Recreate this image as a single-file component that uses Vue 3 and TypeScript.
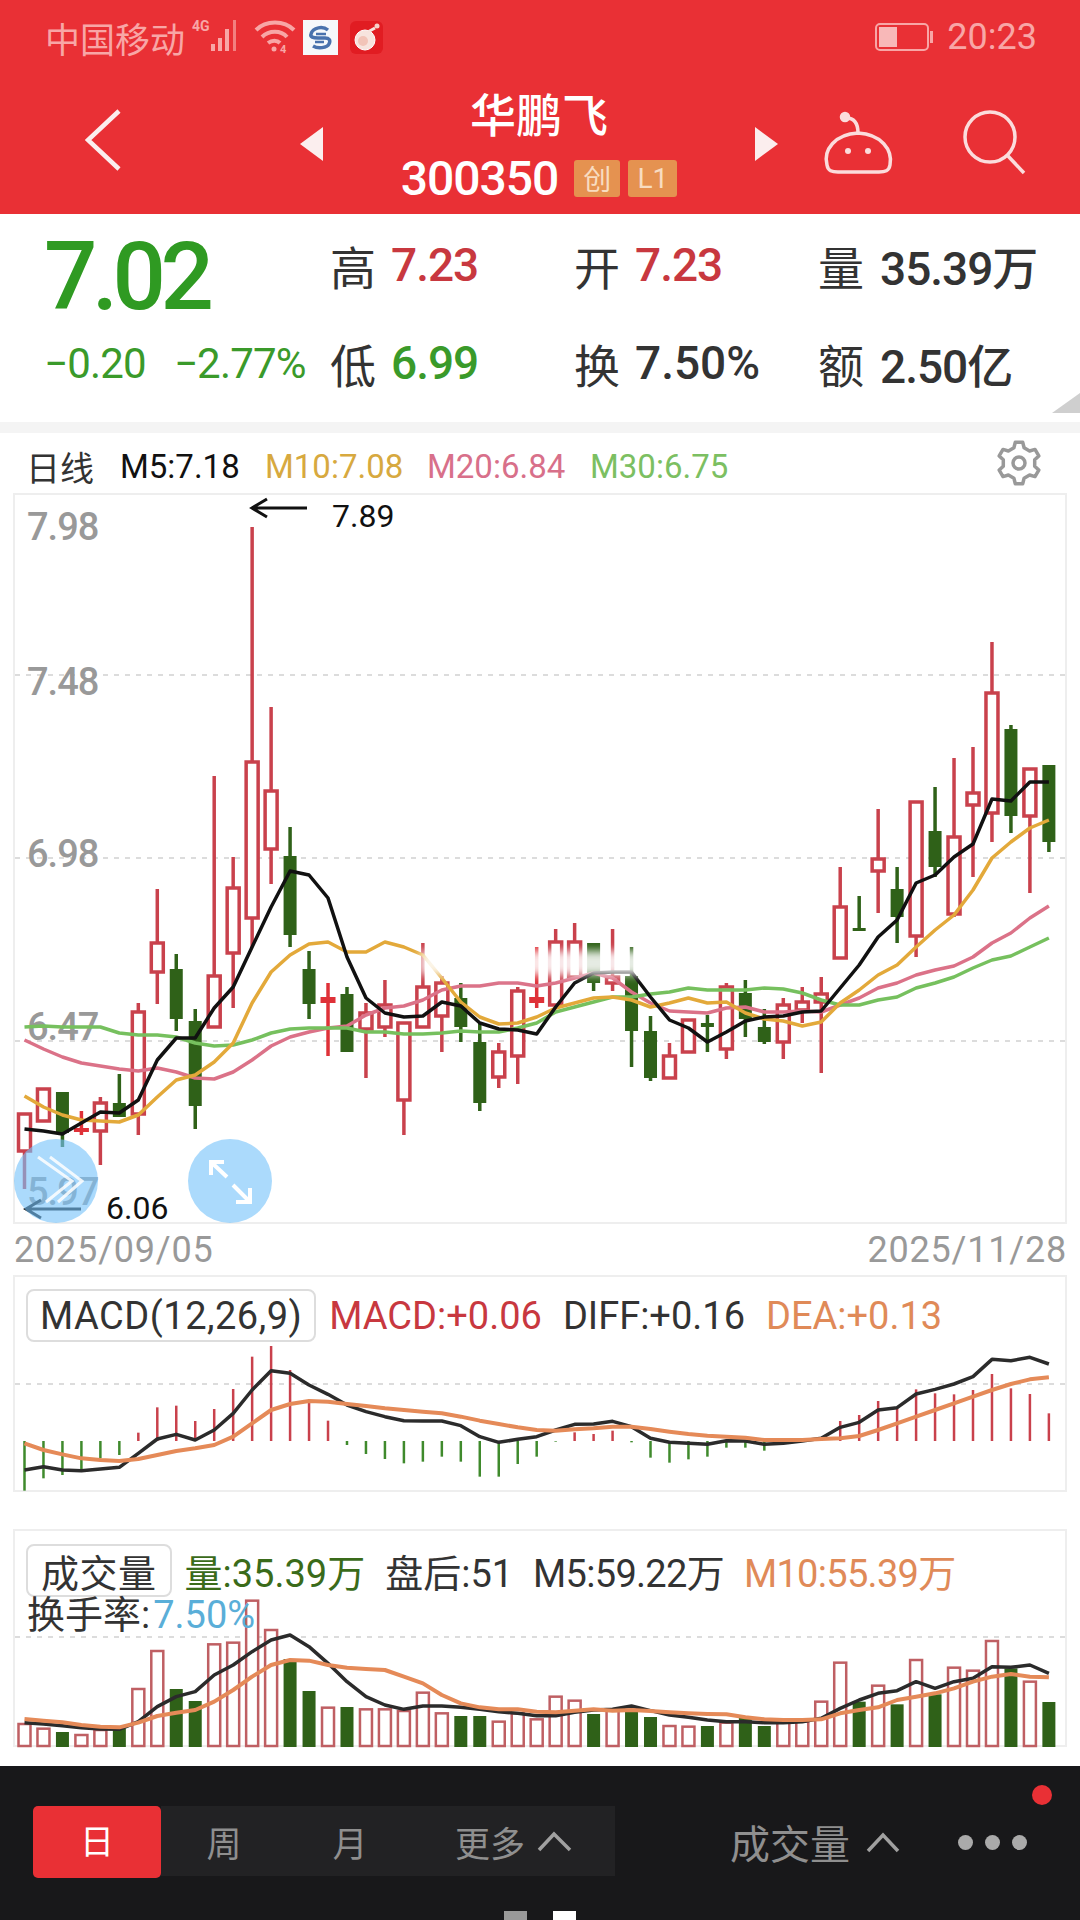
<template>
  <div class="phone">
    <header class="top">
      <div class="status">
        <span class="carrier">中国移动</span>
        <svg class="st-signal" width="53" height="36" viewBox="0 0 53 36">
          <text x="0" y="13" class="st-4g">4G</text>
          <rect x="19" y="26" width="4" height="7" fill="#f8a6a6" />
          <rect x="26" y="20" width="4" height="13" fill="#f8a6a6" />
          <rect x="33" y="11" width="4" height="22" fill="#f8a6a6" />
          <rect x="41" y="2" width="3" height="31" fill="#f28080" />
        </svg>
        <svg class="st-wifi" width="40" height="34" viewBox="0 0 40 34" fill="none" stroke="#f8a6a6" stroke-width="4">
          <path d="M1 10 C11 0 29 0 39 10" />
          <path d="M7 17 C14 10 26 10 32 17" />
          <path d="M13 23 C17 20 22 20 25 23" />
          <circle cx="19" cy="29" r="2.5" fill="#f8a6a6" stroke="none" />
          <text x="25" y="33" class="st-4k">4</text>
        </svg>
        <svg class="st-app" width="35" height="35" viewBox="0 0 35 35" fill="none">
          <rect width="35" height="35" fill="#f6f8fb" />
          <path d="M25 10 C20 6 10 7 8 14 C7 17 10 18 15 18 L22 18 C26 18 28 20 26 24 C24 28 15 29 10 26" stroke="#4a72ad" stroke-width="3.5" />
          <path d="M13 14 L23 14 M12 22 L21 22" stroke="#4a72ad" stroke-width="2.5" />
        </svg>
        <svg class="st-app2" width="33" height="33" viewBox="0 0 33 33">
          <rect width="33" height="33" rx="6" fill="#e11c22" />
          <circle cx="15" cy="19" r="10" fill="#f7e4de" stroke="#fff" stroke-width="1" />
          <path d="M16 12 L25 7" stroke="#f7e4de" stroke-width="3" />
          <circle cx="27" cy="5" r="2.5" fill="#f7d0c8" />
          <circle cx="13" cy="20" r="5" fill="#f2c4b8" />
        </svg>
        <span class="st-fill"></span>
        <svg class="st-batt" width="58" height="28" viewBox="0 0 58 28" fill="none">
          <rect x="1" y="1" width="52" height="26" rx="4" stroke="#f8a6a6" stroke-width="2" />
          <rect x="4" y="4" width="18" height="20" fill="#f8b8b8" />
          <rect x="55" y="8" width="3" height="12" fill="#f8a6a6" />
        </svg>
        <span class="clock">20:23</span>
      </div>
      <nav class="nav">
        <svg class="nav-back" width="36" height="62" viewBox="0 0 36 62" fill="none" stroke="#fbeeee" stroke-width="4.5">
          <path d="M34 2 L3 31 L34 60" />
        </svg>
        <svg class="nav-prev" width="23" height="34" viewBox="0 0 23 34"><path d="M23 0 L0 17 L23 34 Z" fill="#fbeeee" /></svg>
        <div class="nav-title">
          <div class="stock-name">华鹏飞</div>
          <div class="stock-code">
            <span class="code-num">300350</span>
            <span class="tag">创</span>
            <span class="tag tag-l">L1</span>
          </div>
        </div>
        <svg class="nav-next" width="23" height="34" viewBox="0 0 23 34"><path d="M0 0 L23 17 L0 34 Z" fill="#fbeeee" /></svg>
        <svg class="nav-robot" width="80" height="70" viewBox="820 110 80 70" fill="none" stroke="#fbdcdc" stroke-width="3.5">
          <circle cx="845" cy="117" r="3.5" fill="#fbdcdc" />
          <path d="M846 118 C855 118 858 124 858 133" />
          <path d="M827 165 C823 150 835 134 858 133 C881 134 893 150 890 165 C889 171 885 172 879 172 L838 172 C832 172 828 171 827 165 Z" />
          <circle cx="848" cy="151" r="3" fill="#fbdcdc" stroke="none" />
          <circle cx="868" cy="151" r="3" fill="#fbdcdc" stroke="none" />
        </svg>
        <svg class="nav-search" width="66" height="66" viewBox="960 110 66 66" fill="none" stroke="#fbdcdc" stroke-width="3.5">
          <circle cx="990" cy="137" r="25" />
          <path d="M1008 156 L1024 173" />
        </svg>
      </nav>
    </header>

    <section class="quote">
      <div class="price">7.02</div>
      <div class="cell"><i>高</i><b class="up">7.23</b></div>
      <div class="cell"><i>开</i><b class="up">7.23</b></div>
      <div class="cell wide"><i>量</i><b>35.39万</b></div>
      <div class="change"><span>−0.20</span><span>−2.77%</span></div>
      <div class="cell"><i>低</i><b class="down">6.99</b></div>
      <div class="cell"><i>换</i><b class="pct">7.50%</b></div>
      <div class="cell wide"><i>额</i><b>2.50亿</b></div>
      <span class="corner"></span>
    </section>
    <div class="band"></div>

    <div class="ma-row">
      <span class="ma-period">日线</span>
      <span class="ma m5">M5:7.18</span>
      <span class="ma m10">M10:7.08</span>
      <span class="ma m20">M20:6.84</span>
      <span class="ma m30">M30:6.75</span>
      <svg class="gear" width="46" height="46" viewBox="-23 -23 46 46" fill="none" stroke="#999" stroke-width="3.5">
        <path :d="gearPath" stroke-linejoin="round" />
        <circle r="6" />
      </svg>
    </div>

    <div class="box kline">
      <svg class="plot" width="1054" height="731" viewBox="13 493 1054 731">
        <line v-for="y in [675, 858, 1041]" :key="y" x1="15" x2="1065" :y1="y" :y2="y" class="grid" />
        <text v-for="a in axisLabels" :key="a.t" x="27" :y="a.y" class="axis">{{ a.t }}</text>
        <g v-for="c in candles" :key="c.x">
          <line :x1="c.x" :x2="c.x" :y1="c.wt" :y2="c.wb" :stroke="c.color" stroke-width="3.5" />
          <rect v-if="c.kind === 'h'" :x="c.x - 6" :y="c.bt" width="12" :height="c.bb - c.bt" fill="#fff" :stroke="c.color" stroke-width="3.5" />
          <rect v-else :x="c.x - 6.5 - (c.kind === 'd' ? 1 : 0)" :y="c.bt" :width="c.kind === 'd' ? 15 : 13" :height="c.bb - c.bt" :fill="c.color" />
        </g>
        <polyline :points="line(ma20)" class="ln" stroke="#db7288" />
        <polyline :points="line(ma30)" class="ln" stroke="#76c05e" />
        <polyline :points="line(ma10)" class="ln" stroke="#e3a93a" />
        <polyline :points="line(ma5)" class="ln" stroke="#111" />
        <rect x="420" y="951" width="238" height="24" fill="#fff" opacity=".88" filter="url(#smear)" />
        <defs>
          <filter id="smear" x="-10%" y="-50%" width="120%" height="200%"><feGaussianBlur stdDeviation="4" /></filter>
        </defs>
        <path d="M307 508 L252 508 M267 499 L252 508 L267 517" class="arrow" />
        <text x="332" y="527" class="note">7.89</text>
        <path d="M81 1209 L26 1209 M41 1200 L26 1209 L41 1218" class="arrow" />
        <text x="106" y="1219" class="note">6.06</text>
      </svg>
      <div class="float-btn btn-left">
        <svg width="84" height="84" viewBox="0 0 84 84" fill="none" stroke="#fff" stroke-width="3" opacity=".85">
          <path d="M24 18 L58 42 L32 63" />
          <path d="M36 18 L68 42 L44 63" />
        </svg>
      </div>
      <div class="float-btn btn-right">
        <svg width="84" height="84" viewBox="0 0 84 84" fill="none" stroke="#fff" stroke-width="4">
          <path d="M39 38 L23 23 M23 36 L23 23 L36 23" />
          <path d="M45 46 L62 63 M62 49 L62 63 L48 63" />
        </svg>
      </div>
    </div>

    <div class="dates"><span>2025/09/05</span><span>2025/11/28</span></div>

    <div class="box macd">
      <svg class="plot" width="1054" height="217" viewBox="13 1275 1054 217">
        <line x1="15" x2="1065" y1="1384" y2="1384" class="grid" />
        <line v-for="b in macdBars" :key="b.x" :x1="b.x" :x2="b.x" :y1="1441" :y2="b.y" :stroke="b.color" stroke-width="2.5" />
        <polyline :points="macdLine(diff)" class="ln" stroke="#2b2b2b" />
        <polyline :points="macdLine(dea)" class="ln ln-wide" stroke="#e58a58" />
      </svg>
      <div class="legend legend-macd">
        <span class="legend-btn">MACD(12,26,9)</span>
        <span class="lg red">MACD:+0.06</span>
        <span class="lg">DIFF:+0.16</span>
        <span class="lg orange">DEA:+0.13</span>
      </div>
    </div>

    <div class="box vol">
      <svg class="plot" width="1054" height="218" viewBox="13 1529 1054 218">
        <line x1="15" x2="1065" y1="1637" y2="1637" class="grid" />
        <g v-for="b in volBars" :key="b.x">
          <rect v-if="b.hollow" :x="b.x - 6" :y="b.y" width="12" :height="1746 - b.y" fill="#fff" stroke="#bf5f63" stroke-width="2.5" />
          <rect v-else :x="b.x - 6.5" :y="b.y" width="13" :height="1747 - b.y" fill="#2f6118" />
        </g>
        <polyline :points="volLine(volB)" class="ln" stroke="#2b2b2b" />
        <polyline :points="volLine(volO)" class="ln ln-wide" stroke="#e58a58" />
      </svg>
      <div class="legend legend-vol">
        <span class="legend-btn">成交量</span>
        <span class="lg green">量:35.39万</span>
        <span class="lg">盘后:51</span>
        <span class="lg tight">M5:59.22万</span>
        <span class="lg tight orange">M10:55.39万</span>
      </div>
      <div class="legend-2">换手率:<span class="blue">7.50%</span></div>
    </div>

    <footer class="bottom">
      <div class="tab-on">日</div>
      <div class="tabs">
        <span class="tab">周</span>
        <span class="tab">月</span>
        <span class="tab tab-more">更多
          <svg width="35" height="22" viewBox="0 0 35 22" fill="none" stroke="#a0a0a0" stroke-width="3.5"><path d="M2 20 L17 4 L33 20" /></svg>
        </span>
      </div>
      <div class="indicator">成交量
        <svg width="34" height="22" viewBox="0 0 34 22" fill="none" stroke="#a0a0a0" stroke-width="3.5"><path d="M2 20 L17 4 L32 20" /></svg>
      </div>
      <div class="dots"><i></i><i></i><i></i></div>
      <span class="red-dot"></span>
      <span class="pager pager-a"></span>
      <span class="pager pager-b"></span>
    </footer>
  </div>
</template>

<script setup lang="ts">
type Kind = 'h' | 'g' | 'd'

const RED = '#c9414c'
const GREEN = '#2f6118'
const xAt = (i: number) => 24.5 + 18.97 * i

// wick top, body top, body bottom, wick bottom, type
const raw: [number, number, number, number, Kind][] = [
  [1114, 1114, 1151, 1189, 'h'], [1089, 1089, 1121, 1121, 'h'], [1092, 1092, 1133, 1147, 'g'],
  [1111, 1128, 1132, 1135, 'd'], [1097, 1103, 1131, 1165, 'h'], [1074, 1103, 1117, 1117, 'g'],
  [1003, 1012, 1114, 1135, 'h'], [889, 943, 972, 1004, 'h'], [954, 969, 1019, 1031, 'g'],
  [1009, 1021, 1106, 1129, 'g'], [776, 976, 1027, 1027, 'h'], [857, 888, 953, 1008, 'h'],
  [527, 762, 918, 947, 'h'], [707, 791, 849, 884, 'h'], [827, 856, 935, 947, 'g'],
  [951, 969, 1004, 1019, 'g'], [983, 997, 1003, 1056, 'd'], [987, 994, 1052, 1052, 'g'],
  [1003, 1013, 1029, 1078, 'h'], [980, 1005, 1027, 1037, 'h'], [1023, 1023, 1100, 1135, 'h'],
  [943, 987, 1027, 1027, 'h'], [976, 983, 1016, 1052, 'h'], [983, 998, 1027, 1042, 'g'],
  [1023, 1042, 1103, 1111, 'g'], [1043, 1052, 1077, 1088, 'h'], [987, 991, 1056, 1084, 'h'],
  [947, 997, 1003, 1008, 'd'], [929, 942, 1005, 1005, 'h'], [923, 942, 977, 977, 'h'],
  [943, 943, 983, 991, 'g'], [929, 977, 983, 991, 'h'], [947, 976, 1031, 1067, 'g'],
  [1016, 1031, 1078, 1081, 'g'], [1043, 1056, 1078, 1078, 'h'], [1020, 1020, 1052, 1052, 'h'],
  [1015, 1023, 1027, 1052, 'g'], [983, 987, 1049, 1059, 'h'], [980, 993, 1019, 1037, 'g'],
  [1009, 1027, 1042, 1044, 'g'], [998, 1005, 1042, 1059, 'h'], [987, 1002, 1010, 1023, 'h'],
  [977, 994, 1002, 1073, 'h'], [867, 907, 958, 958, 'h'], [896, 928, 931, 931, 'g'],
  [809, 859, 871, 913, 'h'], [867, 889, 917, 943, 'g'], [802, 802, 936, 957, 'h'],
  [787, 831, 867, 877, 'g'], [758, 837, 914, 917, 'h'], [747, 793, 805, 877, 'h'],
  [642, 693, 813, 842, 'h'], [725, 729, 816, 833, 'g'], [769, 769, 816, 893, 'h'],
  [765, 765, 842, 852, 'g']
]

const candles = raw.map(([wt, bt, bb, wb, kind], i) => ({
  x: xAt(i), wt, bt, bb, wb, kind,
  color: kind === 'g' ? GREEN : kind === 'd' ? '#df3138' : RED
}))

const ma5 = [1129, 1131, 1134, 1123, 1112, 1113, 1100, 1060, 1038, 1038, 1008, 987, 947, 907, 871, 875, 898, 957, 998, 1013, 1017, 1016, 1002, 1006, 1023, 1029, 1030, 1034, 1007, 983, 973, 972, 972, 997, 1020, 1028, 1042, 1032, 1021, 1017, 1016, 1012, 1011, 988, 965, 937, 920, 883, 875, 857, 844, 799, 801, 782, 782]
const ma10 = [1096, 1107, 1115, 1120, 1121, 1122, 1115, 1097, 1080, 1075, 1062, 1043, 1003, 972, 955, 944, 942, 952, 952, 942, 947, 955, 978, 1002, 1017, 1024, 1023, 1017, 1008, 1003, 998, 997, 1000, 1007, 1003, 998, 1003, 1002, 1013, 1019, 1021, 1026, 1022, 1003, 990, 975, 965, 947, 930, 915, 890, 858, 842, 828, 820]
const ma20 = [1040, 1049, 1057, 1063, 1066, 1069, 1071, 1068, 1072, 1078, 1079, 1072, 1060, 1046, 1037, 1032, 1028, 1026, 1015, 1008, 1006, 1000, 990, 986, 986, 983, 983, 986, 983, 978, 973, 978, 992, 1003, 1011, 1012, 1013, 1008, 1007, 1012, 1012, 1011, 1012, 1005, 998, 988, 983, 975, 970, 966, 957, 943, 933, 918, 906]
const ma30 = [1027, 1026, 1027, 1027, 1027, 1033, 1035, 1035, 1037, 1043, 1046, 1045, 1040, 1033, 1029, 1028, 1028, 1028, 1032, 1032, 1034, 1034, 1033, 1031, 1032, 1032, 1028, 1023, 1012, 1007, 1002, 997, 997, 994, 992, 988, 990, 990, 990, 988, 989, 993, 1000, 1005, 1005, 1000, 997, 988, 983, 977, 968, 960, 956, 947, 938]

const axisLabels = [
  { t: '7.98', y: 540 }, { t: '7.48', y: 695 }, { t: '6.98', y: 867 },
  { t: '6.47', y: 1040 }, { t: '5.97', y: 1205 }
]

const line = (ys: number[]) => ys.map((y, i) => `${xAt(i).toFixed(1)},${y}`).join(' ')

// MACD 和成交量的数值按截图里的像素读出来
const macdY = (p: number) => 1260 + p / 3
const volY = (p: number) => 1500 + p / 3

const macdEnds = [692, 655, 645, 630, 595, 585, 518, 442, 437, 483, 447, 387, 290, 258, 330, 420, 482, 555, 582, 597, 610, 605, 590, 605, 650, 650, 612, 590, 545, 517, 522, 512, 547, 593, 608, 598, 590, 563, 563, 572, 545, 535, 535, 483, 465, 423, 445, 388, 400, 403, 390, 342, 385, 402, 460]
const macdBars = macdEnds.map((p, i) => ({
  x: xAt(i), y: macdY(p), color: p > 542 ? '#3f8a2c' : '#c9414c'
}))
const diff = [630, 620, 630, 632, 627, 622, 580, 537, 523, 540, 510, 460, 390, 332, 340, 375, 403, 435, 455, 470, 482, 483, 483, 497, 530, 547, 538, 530, 510, 493, 492, 484, 500, 535, 547, 550, 553, 542, 543, 553, 550, 543, 535, 502, 487, 450, 443, 402, 388, 372, 350, 298, 302, 292, 312]
const dea = [550, 570, 583, 595, 600, 603, 597, 585, 573, 565, 555, 530, 490, 450, 432, 423, 425, 432, 438, 445, 450, 455, 460, 470, 482, 492, 502, 510, 512, 508, 505, 500, 500, 507, 515, 522, 527, 530, 533, 540, 540, 540, 537, 535, 528, 510, 490, 470, 450, 430, 410, 390, 372, 358, 352]
const macdLine = (ps: number[]) => line(ps.map(macdY))

const volTops = [672, 686, 696, 705, 690, 685, 567, 453, 567, 603, 433, 428, 302, 390, 477, 573, 623, 621, 628, 628, 633, 578, 640, 648, 648, 665, 640, 658, 590, 602, 642, 632, 632, 651, 678, 680, 678, 668, 650, 678, 668, 665, 605, 488, 605, 557, 613, 480, 583, 503, 512, 423, 505, 545, 606]
const volGreen = new Set([2, 5, 8, 9, 14, 15, 17, 23, 24, 30, 32, 33, 36, 38, 39, 44, 46, 48, 52, 54])
const volBars = volTops.map((p, i) => ({ x: xAt(i), y: volY(p), hollow: !volGreen.has(i) }))
const volB = [668, 672, 677, 683, 687, 688, 665, 620, 590, 575, 525, 495, 455, 420, 405, 440, 490, 545, 590, 615, 628, 618, 618, 622, 628, 635, 640, 647, 647, 637, 630, 628, 618, 632, 645, 652, 660, 665, 665, 668, 668, 665, 655, 625, 600, 580, 572, 545, 565, 545, 535, 500, 502, 495, 520]
const volO = [657, 662, 667, 675, 680, 682, 668, 648, 638, 630, 605, 570, 530, 495, 480, 482, 495, 503, 507, 510, 530, 550, 585, 610, 622, 628, 628, 635, 637, 632, 628, 632, 630, 633, 637, 640, 642, 643, 652, 658, 660, 660, 658, 640, 630, 622, 600, 590, 580, 565, 545, 530, 522, 530, 532]
const volLine = (ps: number[]) => line(ps.map(volY))

// 设置图标的齿轮轮廓
const gearPath = (() => {
  const pts: string[] = []
  const teeth = 6
  for (let t = 0; t < teeth; t++) {
    const a = (t / teeth) * Math.PI * 2 - Math.PI / 2
    const step = Math.PI / teeth
    const corners: [number, number][] = [
      [16, a - step * 0.62], [21, a - step * 0.34], [21, a + step * 0.34], [16, a + step * 0.62]
    ]
    corners.forEach(([r, ang]) => {
      pts.push(`${(r * Math.cos(ang)).toFixed(1)} ${(r * Math.sin(ang)).toFixed(1)}`)
    })
  }
  return 'M' + pts.join(' L') + ' Z'
})()
</script>

<style scoped>
.phone {
  position: relative;
  display: flex;
  flex-direction: column;
  width: 1080px;
  height: 1920px;
  overflow: hidden;
  background: #fff;
  font-family: Roboto, "Noto Sans CJK SC", sans-serif;
  color: #333;
}

/* 顶部红色区域 */
.top {
  height: 214px;
  background: #e93035;
  flex: none;
}
.status {
  display: flex;
  align-items: center;
  height: 74px;
  padding: 0 43px 0 45px;
  color: #f8a6a6;
}
.carrier {
  font-size: 35px;
  width: 147px;
  white-space: nowrap;
}
.st-signal {
  margin-top: -2px;
  overflow: visible;
}
.st-4g {
  font: 700 14px Roboto, sans-serif;
  fill: #f8a6a6;
}
.st-4k {
  font: 700 11px Roboto, sans-serif;
  fill: #f8a6a6;
  stroke: none;
}
.st-wifi {
  margin-left: 10px;
  overflow: visible;
}
.st-app {
  margin-left: 8px;
}
.st-app2 {
  margin-left: 12px;
}
.st-fill {
  flex: 1;
}
.clock {
  font-size: 36px;
  margin-left: 14px;
}
.nav {
  display: flex;
  align-items: flex-start;
  height: 140px;
}
.nav-back {
  margin: 35px 0 0 85px;
}
.nav-prev {
  margin: 53px 0 0 179px;
}
.nav-title {
  width: 432px;
  margin-top: 18px;
  text-align: center;
  color: #fff;
}
.stock-name {
  font-size: 46px;
  font-weight: 500;
  line-height: 48px;
}
.stock-code {
  display: flex;
  justify-content: center;
  align-items: center;
  gap: 8px;
  height: 40px;
  margin-top: 18px;
}
.code-num {
  font-size: 48px;
  font-weight: 500;
  letter-spacing: -1px;
  margin-right: 8px;
}
.tag {
  display: inline-flex;
  justify-content: center;
  align-items: center;
  width: 46px;
  height: 37px;
  border-radius: 3px;
  background: #e59250;
  color: #f8dcc0;
  font-size: 28px;
}
.tag-l {
  width: 49px;
}
.nav-next {
  margin: 53px 0 0;
}
.nav-robot {
  margin: 36px 0 0 42px;
}
.nav-search {
  margin: 36px 0 0 60px;
}

/* 行情数字 */
.quote {
  position: relative;
  display: grid;
  grid-template-columns: 330px 244px 244px 1fr;
  grid-template-rows: 54px 54px;
  row-gap: 44px;
  align-items: center;
  height: 208px;
  padding-top: 24px;
  box-sizing: border-box;
  flex: none;
}
.price {
  margin: 24px 0 0 44px;
  font-size: 94px;
  line-height: 54px;
  font-weight: 500;
  letter-spacing: -5.5px;
  color: #2f9a22;
}
.change {
  display: flex;
  gap: 28px;
  padding-left: 44px;
  font-size: 42px;
  color: #3a9a2a;
  white-space: nowrap;
  letter-spacing: -0.8px;
}
.cell {
  display: flex;
  align-items: center;
  gap: 15px;
  white-space: nowrap;
}
.cell.wide {
  gap: 16px;
}
.cell i {
  font-style: normal;
  font-size: 46px;
  color: #333;
}
.cell b {
  font-size: 46px;
  font-weight: 500;
  letter-spacing: -1px;
  color: #333;
}
.cell b.pct {
  letter-spacing: 0;
}
.cell b.up {
  color: #c8383f;
}
.cell b.down {
  color: #3a9a2a;
}
.corner {
  position: absolute;
  right: 0;
  bottom: 9px;
  width: 0;
  height: 0;
  border-left: 28px solid transparent;
  border-bottom: 20px solid #cfcfcf;
}
.band {
  height: 11px;
  background: #f4f4f4;
  flex: none;
}

.ma-row {
  display: flex;
  align-items: center;
  height: 60px;
  padding: 6px 38px 0 26px;
  box-sizing: border-box;
  font-size: 33px;
  flex: none;
  white-space: nowrap;
}
.ma-period {
  width: 94px;
  color: #333;
  font-size: 34px;
}
.m5 {
  width: 145px;
  color: #111;
}
.m10 {
  width: 162px;
  color: #d7a93f;
}
.m20 {
  width: 163px;
  color: #d8708a;
}
.m30 {
  color: #7cbf62;
}
.gear {
  margin-left: auto;
  margin-top: -6px;
}

.box {
  position: relative;
  margin: 0 13px;
  box-shadow: inset 0 0 0 2px #eeeeee;
  flex: none;
}
.plot {
  display: block;
  overflow: visible;
}
.kline {
  height: 731px;
}
.macd {
  height: 217px;
}
.vol {
  height: 218px;
  margin-top: 37px;
}
.grid {
  stroke: #dcdcdc;
  stroke-width: 2;
  stroke-dasharray: 5 6;
}
.axis {
  font-size: 38px;
  font-weight: 500;
  letter-spacing: -1px;
  fill: #999;
}
.note {
  font-size: 32px;
  fill: #111;
}
.arrow {
  fill: none;
  stroke: #111;
  stroke-width: 3;
}
.ln {
  fill: none;
  stroke-width: 3.5;
  stroke-linejoin: round;
}
.ln-wide {
  stroke-width: 4;
}
.float-btn {
  position: absolute;
  top: 646px;
  width: 84px;
  height: 84px;
  border-radius: 50%;
  background: rgba(120, 195, 250, 0.62);
}
.btn-left {
  left: 1px;
}
.btn-right {
  left: 175px;
}

.dates {
  display: flex;
  justify-content: space-between;
  height: 51px;
  padding: 6px 13px 0 14px;
  box-sizing: border-box;
  font-size: 36px;
  line-height: 40px;
  letter-spacing: 0.8px;
  color: #999;
  flex: none;
}

.legend {
  position: absolute;
  left: 13px;
  top: 14px;
  display: flex;
  align-items: center;
  font-size: 38px;
  white-space: nowrap;
}
.legend-btn {
  display: inline-flex;
  align-items: center;
  height: 53px;
  padding: 0 12px;
  margin-right: 13px;
  border: 2px solid #ddd;
  border-radius: 8px;
  box-sizing: border-box;
  color: #333;
  background: #fff;
  letter-spacing: 0.5px;
}
.lg {
  margin-right: 21px;
  color: #333;
}
.legend-vol .legend-btn {
  padding: 0 13px;
}
.legend-vol .lg {
  margin-right: 20px;
}
.tight {
  letter-spacing: -0.7px;
}
.red {
  color: #c8383f;
}
.orange {
  color: #e08a58;
}
.green {
  color: #3a6b1a;
}
.blue {
  color: #5aaed8;
  margin-left: 3px;
}
.legend-2 {
  position: absolute;
  left: 14px;
  top: 55px;
  font-size: 38px;
  color: #333;
  white-space: nowrap;
}

/* 底部工具栏 */
.bottom {
  position: relative;
  display: flex;
  align-items: flex-start;
  height: 154px;
  margin-top: 19px;
  padding: 40px 0 0 33px;
  box-sizing: border-box;
  background: #18181a;
  color: #8f8f8f;
  flex: none;
}
.tab-on {
  width: 128px;
  height: 72px;
  border-radius: 5px;
  background: #e93035;
  color: #fff;
  font-size: 34px;
  line-height: 72px;
  text-align: center;
}
.tabs {
  display: flex;
  align-items: center;
  width: 454px;
  height: 70px;
  background: #222224;
  font-size: 35px;
}
.tab {
  width: 126px;
  text-align: center;
}
.tab-more {
  display: flex;
  align-items: center;
  gap: 12px;
  width: 180px;
  padding-left: 42px;
  box-sizing: border-box;
}
.indicator {
  display: flex;
  align-items: center;
  gap: 16px;
  height: 72px;
  margin-left: 115px;
  font-size: 40px;
  white-space: nowrap;
}
.dots {
  display: flex;
  gap: 12px;
  margin-left: 58px;
  height: 72px;
  align-items: center;
}
.dots i {
  width: 15px;
  height: 15px;
  border-radius: 50%;
  background: #aaa;
}
.red-dot {
  position: absolute;
  left: 1032px;
  top: 19px;
  width: 20px;
  height: 20px;
  border-radius: 50%;
  background: #e93035;
}
.pager {
  position: absolute;
  bottom: 0;
  width: 23px;
  height: 9px;
}
.pager-a {
  left: 504px;
  background: #999;
}
.pager-b {
  left: 553px;
  background: #fff;
}
</style>
